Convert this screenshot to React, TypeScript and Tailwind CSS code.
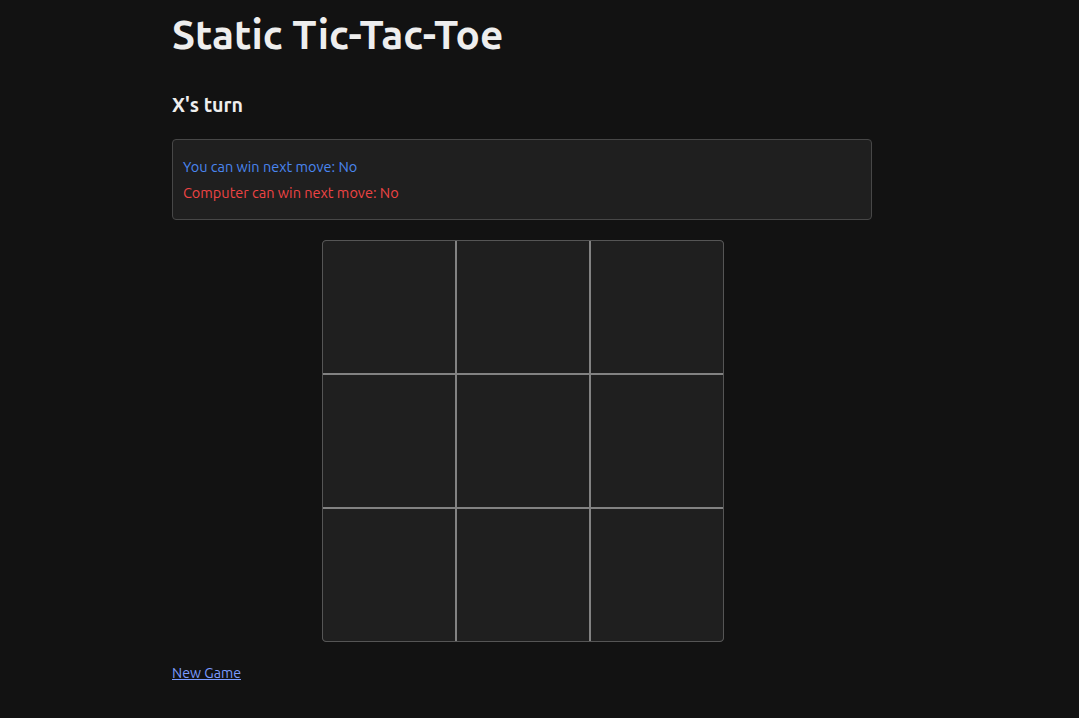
import React, { useState } from 'react';

type Cell = 'X' | 'O' | null;

const App: React.FC = () => {
  const [board, setBoard] = useState<Cell[]>(Array(9).fill(null));

  return (
    <div className="min-h-screen bg-[#121212] text-[#eeeeee] font-['Ubuntu','Noto_Sans',sans-serif]">
      <div className="w-[700px] ml-[172px] pt-[10px]">
        <h1 className="text-[40.6px] leading-[48px] font-bold">Static Tic-Tac-Toe</h1>
        <h2 className="mt-[33px] text-[19.6px] leading-[28px] font-bold">X's turn</h2>

        <div className="mt-[20px] rounded-[4px] border border-[#474747] bg-[#1f1f1f] px-[10px] pt-[14px] pb-[13px] text-[14.5px] leading-[26px]">
          <p className="text-[#4a86f0]">You can win next move: No</p>
          <p className="text-[#ee4444]">Computer can win next move: No</p>
        </div>

        <div className="mt-[20px] flex justify-center pl-[2px]">
          <div className="grid grid-cols-[132px_132px_132px] grid-rows-[132px_132px_132px] gap-[2px] rounded-[4px] border border-[#555555] bg-[#828282] overflow-hidden">
            {board.map((c, i) => (
              <button
                key={i}
                onClick={() => {
                  if (c) return;
                  const next = board.slice();
                  next[i] = 'X';
                  setBoard(next);
                }}
                className="bg-[#1f1f1f] text-[64px] font-bold text-[#eeeeee]"
              >
                {c}
              </button>
            ))}
          </div>
        </div>

        <a
          href="#"
          onClick={(e) => {
            e.preventDefault();
            setBoard(Array(9).fill(null));
          }}
          className="mt-[21px] inline-block text-[14.2px] leading-[20px] text-[#7c9cff] underline"
        >
          New Game
        </a>
      </div>
    </div>
  );
};

export default App;
